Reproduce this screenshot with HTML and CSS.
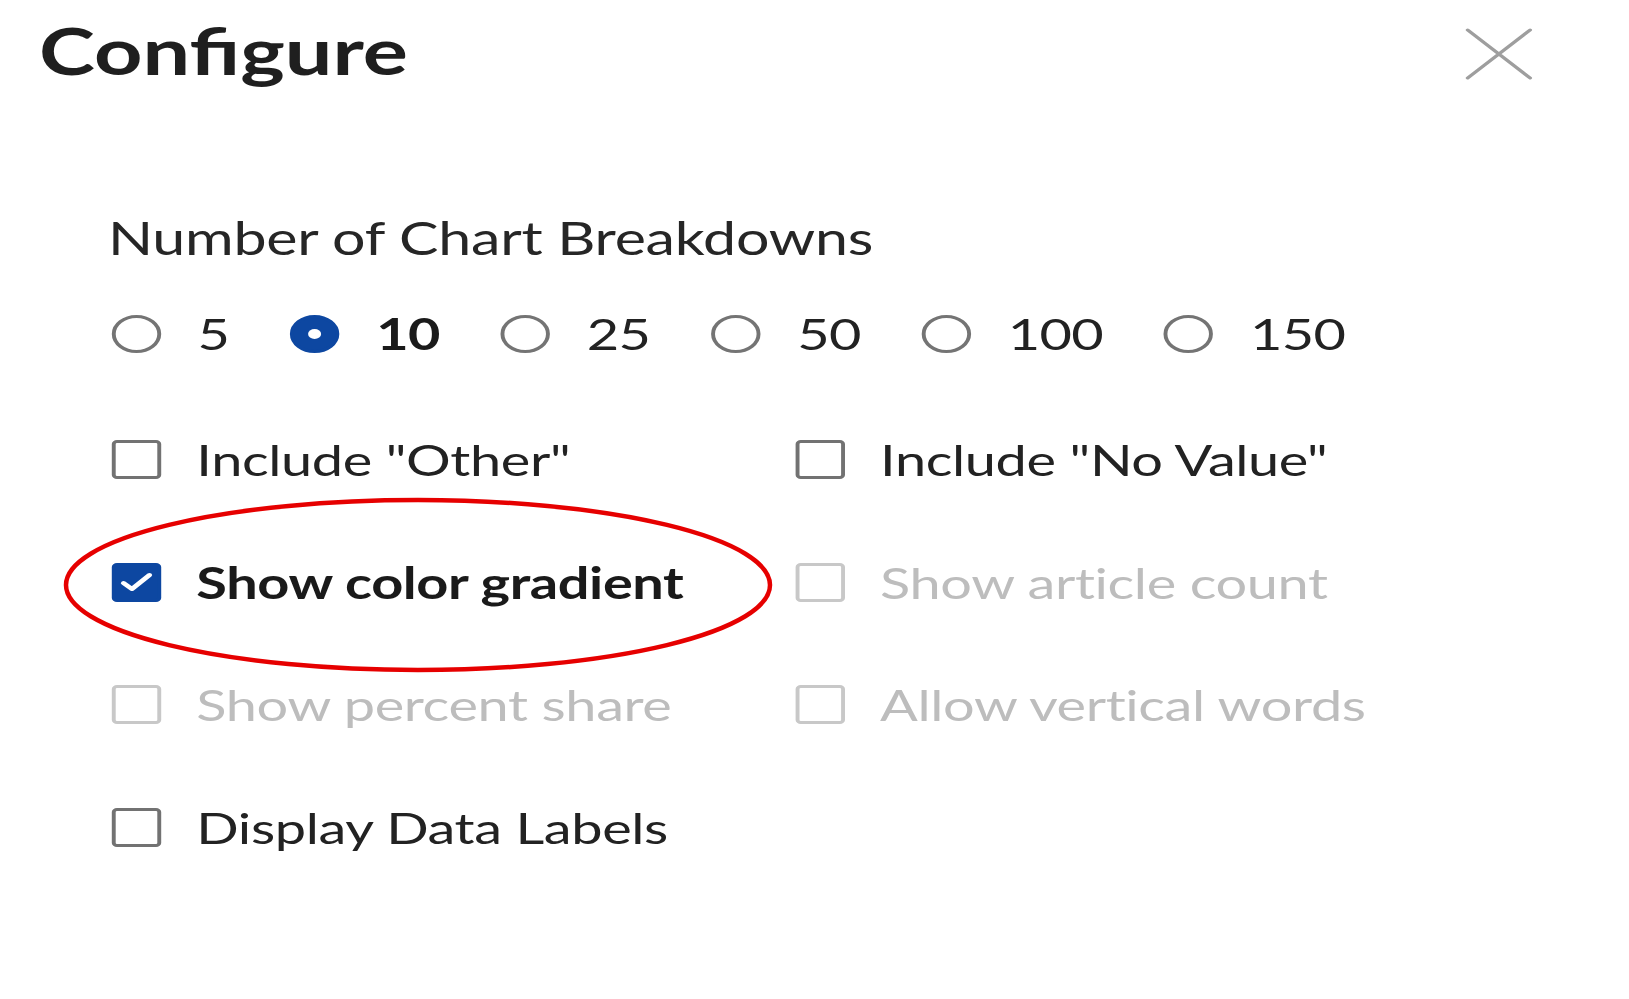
FILE: index.html
```html
<!DOCTYPE html>
<html lang="en">
<head>
<meta charset="utf-8">
<title>Configure</title>
<link rel="stylesheet" href="styles.css">
</head>
<body>
<div class="dialog">
  <header class="header">
    <h1 class="title">Configure</h1>
    <button class="close" aria-label="Close">
      <svg viewBox="0 0 52 52" width="52" height="52"><path d="M2 2 L50 50 M50 2 L2 50" stroke="#9e9e9e" stroke-width="3" stroke-linecap="round" fill="none"/></svg>
    </button>
  </header>

  <h2 class="section-label">Number of Chart Breakdowns</h2>

  <div class="radios">
    <label class="radio"><span class="dot"></span><span class="rlabel">5</span></label>
    <label class="radio selected"><span class="dot"></span><span class="rlabel">10</span></label>
    <label class="radio"><span class="dot"></span><span class="rlabel">25</span></label>
    <label class="radio"><span class="dot"></span><span class="rlabel">50</span></label>
    <label class="radio"><span class="dot"></span><span class="rlabel">100</span></label>
    <label class="radio"><span class="dot"></span><span class="rlabel">150</span></label>
  </div>

  <div class="options">
    <label class="check"><span class="box"></span><span class="clabel">Include "Other"</span></label>
    <label class="check"><span class="box"></span><span class="clabel">Include "No Value"</span></label>
    <label class="check checked"><span class="box"><svg viewBox="0 0 38 38" width="38" height="38"><path d="M9 20 L15.5 26 L29 12" stroke="#fff" stroke-width="4" fill="none" stroke-linecap="round" stroke-linejoin="round"/></svg></span><span class="clabel">Show color gradient</span></label>
    <label class="check disabled"><span class="box"></span><span class="clabel">Show article count</span></label>
    <label class="check disabled"><span class="box"></span><span class="clabel">Show percent share</span></label>
    <label class="check disabled"><span class="box"></span><span class="clabel">Allow vertical words</span></label>
    <label class="check"><span class="box"></span><span class="clabel">Display Data Labels</span></label>
  </div>
</div>

<svg class="annotation" viewBox="0 0 1629 999" width="1629" height="999">
  <ellipse cx="418" cy="585" rx="352" ry="85" fill="none" stroke="#e60000" stroke-width="4.5"/>
</svg>
</body>
</html>
```

FILE: styles.css
```css
html, body {
  margin: 0;
  padding: 0;
  background: #ffffff;
}

body {
  font-family: Lato, "Noto Sans", sans-serif;
  color: #222222;
  width: 1629px;
  height: 999px;
  overflow: hidden;
  position: relative;
}

.dialog {
  width: 1253px;
  box-sizing: border-box;
  padding: 10px 74px 0 30px;
  transform: scaleX(1.3);
  transform-origin: 0 0;
}

.header {
  display: flex;
  justify-content: space-between;
  align-items: flex-start;
}

.title {
  margin: 0;
  font-size: 65px;
  line-height: 80px;
  font-weight: 700;
  color: #1f1f1f;
}

.close {
  margin-top: 18px;
  padding: 0;
  border: 0;
  background: none;
  width: 52px;
  height: 52px;
  display: block;
}

.close svg {
  display: block;
}

.section-label {
  margin: 120px 0 0 53px;
  font-size: 45.5px;
  line-height: 55px;
  letter-spacing: -0.2px;
  font-weight: 400;
  color: #262626;
}

.radios {
  margin: 46px 0 0 56px;
  display: flex;
  align-items: center;
  height: 46px;
}

.radio {
  display: flex;
  align-items: center;
  gap: 28px;
  margin-right: 47px;
  font-size: 43px;
  letter-spacing: -0.5px;
  line-height: 46px;
}

.dot {
  width: 38px;
  height: 38px;
  box-sizing: border-box;
  border: 3px solid #747474;
  border-radius: 50%;
  display: flex;
  align-items: center;
  justify-content: center;
}

.radio.selected .dot {
  background: #0d47a1;
  border-color: #0d47a1;
}

.radio.selected .dot::after {
  content: "";
  width: 10px;
  height: 10px;
  border-radius: 50%;
  background: #ffffff;
}

.radio.selected .rlabel {
  font-weight: 700;
  color: #1a1a1a;
}

.options {
  margin: 75px 0 0 56px;
  display: grid;
  grid-template-columns: 526px auto;
  row-gap: 67.5px;
}

.check {
  display: flex;
  align-items: center;
  gap: 27px;
  height: 55px;
  font-size: 43px;
  letter-spacing: -0.3px;
  line-height: 55px;
  white-space: nowrap;
}

.box {
  width: 38px;
  height: 39px;
  box-sizing: border-box;
  border: 3px solid #727272;
  border-radius: 4px;
  flex: none;
  display: block;
}

.box svg {
  display: block;
  margin: -3px;
}

.check.checked .box {
  background: #0d47a1;
  border-color: #0d47a1;
}

.check.checked .clabel {
  font-weight: 700;
  color: #1a1a1a;
}

.check.disabled .box {
  border-color: #c8c8c8;
}

.check.disabled .clabel {
  color: #bdbdbd;
}

.annotation {
  position: absolute;
  left: 0;
  top: 0;
  pointer-events: none;
}
```
